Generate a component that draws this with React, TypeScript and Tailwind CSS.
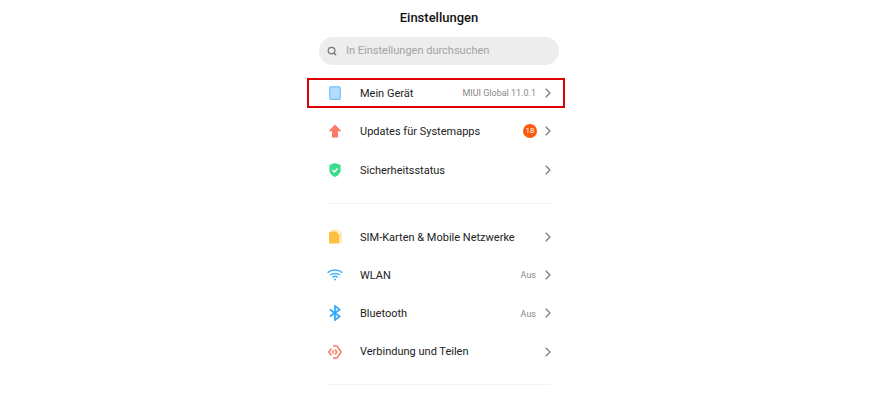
import { ReactNode } from 'react';
import { ChevronRight, Search } from 'lucide-react';

const DeviceIcon = () => (
  <svg width="14" height="14" viewBox="0 0 14 14">
    <rect x="1.8" y="0.8" width="10.4" height="12.6" rx="1" fill="#b5dcff" stroke="#6cc0fb" strokeWidth="1.2" />
  </svg>
);

const UpdateIcon = () => (
  <svg width="14" height="14" viewBox="0 0 14 14">
    <path d="M7 0.5 L13.5 7.2 H10 V13.5 H4 V7.2 H0.5 Z" fill="#fb7b66" />
  </svg>
);

const ShieldIcon = () => (
  <svg width="14" height="14" viewBox="0 0 14 14">
    <path d="M7 0 L12.6 2 V7.5 C12.6 10.5 9.6 12.8 7 14 C4.4 12.8 1.4 10.5 1.4 7.5 V2 Z" fill="#3edc8d" />
    <path d="M4.4 7 L6.3 8.9 L9.6 5.4" fill="none" stroke="#fff" strokeWidth="1.4" />
  </svg>
);

const SimIcon = () => (
  <svg width="14" height="14" viewBox="0 0 14 14">
    <path d="M4 0.5 H10 L13 3 V12.5" fill="none" stroke="#fdd687" strokeWidth="1" />
    <path d="M2.5 1.5 H8.5 L11.5 4.5 V13.5 H1 V3 Z" fill="#fdc040" />
  </svg>
);

const WifiIcon = () => (
  <svg className="shrink-0" width="16" height="12" viewBox="0 0 16 12" fill="none" stroke="#3eb2fb" strokeWidth="1.5">
    <path d="M0.6 3.6 C4.8 0.2 11.2 0.2 15.4 3.6" />
    <path d="M3 6 C5.8 3.9 10.2 3.9 13 6" />
    <path d="M5.3 8.3 C6.9 7.1 9.1 7.1 10.7 8.3" />
    <circle cx="8" cy="10.6" r="1" fill="#3eb2fb" stroke="none" />
  </svg>
);

const BluetoothIcon = () => (
  <svg width="14" height="16" viewBox="0 0 14 16" fill="none" stroke="#2ea7fb" strokeWidth="1.7">
    <path d="M1.8 4.5 L11.6 11.3 L7 15 V1 L11.6 4.7 L1.8 11.5" />
  </svg>
);

const ShareIcon = () => (
  <svg className="shrink-0" width="14" height="14" viewBox="0 0 14 14" fill="none" stroke="#fb7b66" strokeWidth="1.5">
    <path d="M5 1 H9 L13.2 7 L9 13 H5" />
    <path d="M3.4 3.5 L0.8 7 L3.4 10.5" />
    <path d="M7 4.5 L8.8 7 L7 9.5" />
    <path d="M5.6 5.5 L4.6 7 L5.6 8.5" />
  </svg>
);

const Row = ({ icon, label, value, badge, boxed }: { icon: ReactNode; label: string; value?: string; badge?: string; boxed?: boolean }) => (
  <div className={boxed ? 'flex h-[30px] items-center border-2 border-[#dd0000] pl-[19px] pr-[7px]' : 'flex h-[30px] items-center pl-[21px] pr-[9px]'}>
    <span className="flex w-[14px] justify-center">{icon}</span>
    <span className="ml-[18px] flex-1 pt-[2px] text-[11px] text-[#222]">{label}</span>
    {value && <span className="pt-[2px] text-[9px] text-[#8a8a8a]">{value}</span>}
    {badge && (
      <span className="mr-[-1px] flex h-[14px] w-[14px] items-center justify-center rounded-full bg-[#fc5a0c] text-[8px] text-white">{badge}</span>
    )}
    <ChevronRight className="ml-[4px] text-[#777]" size={16} strokeWidth={1.6} />
  </div>
);

export default function App() {
  return (
    <div className="flex h-[400px] justify-center overflow-hidden bg-white font-['Roboto',sans-serif]">
      <div className="ml-[-7px] w-[258px]">
        <h1 className="mt-[9px] ml-[6px] text-center text-[13px] leading-[17px] font-medium text-[#111]">Einstellungen</h1>
        <div className="ml-[12px] mr-[6px] mt-[11px] flex h-[28px] items-center rounded-full bg-[#ededed] pl-[8px]">
          <Search className="text-[#777]" size={10} strokeWidth={3} />
          <span className="ml-[9px] text-[11px] text-[#a3a3a3]">In Einstellungen durchsuchen</span>
        </div>
        <div className="mt-[13px] flex flex-col gap-[8.4px]">
          <Row boxed icon={<DeviceIcon />} label="Mein Gerät" value="MIUI Global 11.0.1" />
          <Row icon={<UpdateIcon />} label="Updates für Systemapps" badge="18" />
          <Row icon={<ShieldIcon />} label="Sicherheitsstatus" />
        </div>
        <div className="ml-[20px] mr-[14px] mt-[18px] h-px bg-[#f3f3f3]" />
        <div className="mt-[18px] flex flex-col gap-[8.3px]">
          <Row icon={<SimIcon />} label="SIM-Karten & Mobile Netzwerke" />
          <Row icon={<WifiIcon />} label="WLAN" value="Aus" />
          <Row icon={<BluetoothIcon />} label="Bluetooth" value="Aus" />
          <Row icon={<ShareIcon />} label="Verbindung und Teilen" />
        </div>
        <div className="ml-[20px] mr-[14px] mt-[17px] h-px bg-[#f3f3f3]" />
      </div>
    </div>
  );
}
